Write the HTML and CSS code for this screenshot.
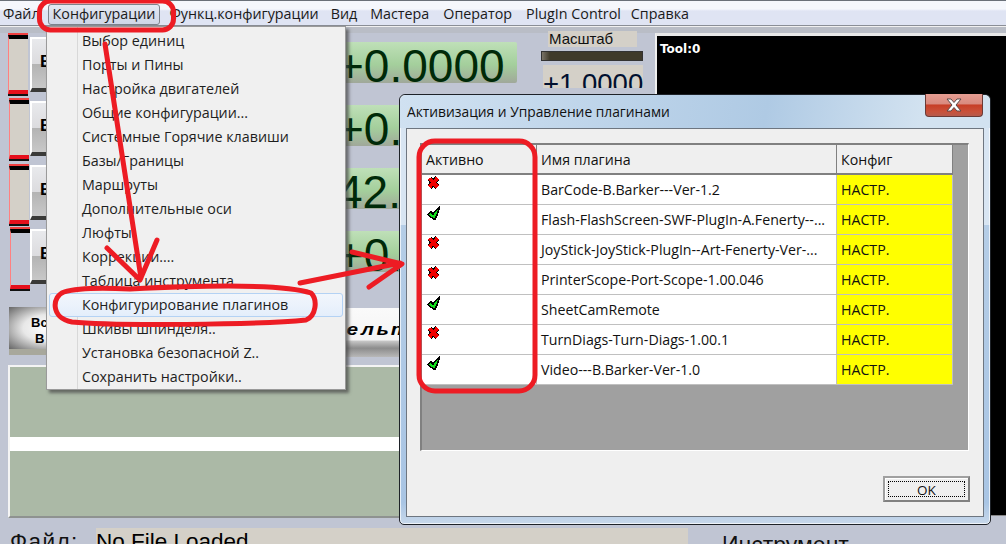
FILE: index.html
```html
<!DOCTYPE html>
<html lang="ru">
<head>
<meta charset="utf-8">
<title>Конфигурирование плагинов</title>
<link rel="stylesheet" href="styles.css">
</head>
<body>
<div class="app">
  <nav class="menubar">
    <span class="mi mi-file">Файл</span>
    <span class="mi mi-conf"><span>Конфигурации</span></span>
    <span class="mi mi-func">Функц.конфигурации</span>
    <span class="mi mi-view">Вид</span>
    <span class="mi mi-wiz">Мастера</span>
    <span class="mi mi-op">Оператор</span>
    <span class="mi mi-plug">PlugIn Control</span>
    <span class="mi">Справка</span>
  </nav>

  <div class="canvas">
    <div class="led led1"></div><div class="led led2"></div><div class="led led3"></div><div class="led led4 off"></div>
    <div class="refbtn rb1">В</div><div class="refbtn rb2">В</div><div class="refbtn rb3">В</div><div class="refbtn rb4">В</div>
    <div class="dro d1">+0.0000</div><div class="dro d2">+0.0000</div><div class="dro d3">42.0000</div><div class="dro d4">+0.0000</div>
    <div class="scale-label">Масштаб</div>
    <div class="scale-bar"></div>
    <div class="scale-val">+1.0000</div>
    <div class="tool-view">Tool:0</div>
    <div class="bigbtn"><span class="l1">Все</span><span class="l2">В</span></div>
    <div class="deltabtn"><span>дельта</span></div>
    <div class="toolpath"></div>
    <div class="file-label">Файл:</div>
    <div class="file-box">No File Loaded</div>
    <div class="tool-label">Инструмент</div>
  </div>

  <ul class="menu">
    <li>Выбор единиц</li>
    <li>Порты и Пины</li>
    <li>Настройка двигателей</li>
    <li>Общие конфигурации...</li>
    <li>Системные Горячие клавиши</li>
    <li>Базы/Границы</li>
    <li>Маршруты</li>
    <li>Дополнительные оси</li>
    <li>Люфты</li>
    <li>Коррекции....</li>
    <li>Таблица инструмента.....</li>
    <li class="hot">Конфигурирование плагинов</li>
    <li>Шкивы шпинделя..</li>
    <li>Установка безопасной Z..</li>
    <li>Сохранить настройки..</li>
  </ul>

  <section class="dialog">
    <header class="dlg-title">
      <span>Активизация и Управление плагинами</span>
      <span class="close"><svg width="18" height="14" viewBox="0 0 18 14"><path d="M2 1h4l3 3.500L12 1h4l-5 6 5 6h-4L9 9.500 6 13H2l5-6z" fill="#fff" stroke="#5a4a4a" stroke-width="1"/></svg></span>
    </header>
    <div class="client">
      <div class="grid">
        <div class="table">
          <div class="th">Активно</div><div class="th">Имя плагина</div><div class="th">Конфиг</div>

          <div class="td icon"><svg class="x" viewBox="0 0 14 14"><use href="#cross"/></svg></div><div class="td">BarCode-B.Barker---Ver-1.2</div><div class="td cfg">НАСТР.</div>
          <div class="td icon"><svg class="x" viewBox="0 0 14 14"><use href="#tick"/></svg></div><div class="td">Flash-FlashScreen-SWF-PlugIn-A.Fenerty--...</div><div class="td cfg">НАСТР.</div>
          <div class="td icon"><svg class="x" viewBox="0 0 14 14"><use href="#cross"/></svg></div><div class="td">JoyStick-JoyStick-PlugIn--Art-Fenerty-Ver-...</div><div class="td cfg">НАСТР.</div>
          <div class="td icon"><svg class="x" viewBox="0 0 14 14"><use href="#cross"/></svg></div><div class="td">PrinterScope-Port-Scope-1.00.046</div><div class="td cfg">НАСТР.</div>
          <div class="td icon"><svg class="x" viewBox="0 0 14 14"><use href="#tick"/></svg></div><div class="td">SheetCamRemote</div><div class="td cfg">НАСТР.</div>
          <div class="td icon"><svg class="x" viewBox="0 0 14 14"><use href="#cross"/></svg></div><div class="td">TurnDiags-Turn-Diags-1.00.1</div><div class="td cfg">НАСТР.</div>
          <div class="td icon"><svg class="x" viewBox="0 0 14 14"><use href="#tick"/></svg></div><div class="td">Video---B.Barker-Ver-1.0</div><div class="td cfg">НАСТР.</div>
        </div>
      </div>
      <div class="actions"><button class="ok"><span>OK</span></button></div>
    </div>
  </section>

  <svg class="marks" width="1006" height="544" viewBox="0 0 1006 544">
    <defs>
      <g id="cross" shape-rendering="crispEdges">
        <path d="M2.500 2.500L10.500 11M10.500 2L2.500 11" fill="none" stroke="#000" stroke-width="5.500"/>
        <path d="M2.500 2.500L10.500 11M10.500 2L2.500 11" fill="none" stroke="#f00000" stroke-width="3.800"/>
      </g>
      <g id="tick" shape-rendering="crispEdges">
        <path d="M0.500 8.500L4 6L6 8L13 0.500L10 9L8 13.500L3.500 11Z" fill="#12e01c" stroke="#000" stroke-width="1.500"/>
      </g>
    </defs>
    <g fill="none" stroke="#ed1c24" stroke-width="5" stroke-linecap="round" stroke-linejoin="round">
      <rect x="39.500" y="1" width="134" height="29" rx="11"/>
      <path d="M105 44L141 278M107 248L140 280L157 240"/>
      <path d="M300 283L400 263M352 252L402 264L369 287"/>
      <path d="M130 289C230 284 290 286 311 293C318 300 316 316 306 320C260 325 110 326 72 322C50 318 52 296 64 292C80 287 110 288 130 289Z"/>
      <rect x="419" y="141" width="116" height="250" rx="16"/>
    </g>
  </svg>
</div>
</body>
</html>
```
FILE: styles.css
```css
* { box-sizing: border-box; }
html, body { margin: 0; padding: 0; }
body { width: 1006px; height: 544px; overflow: hidden; font-family: "Open Sans", "Noto Sans", sans-serif; }

.app { position: relative; width: 1006px; height: 544px; overflow: hidden; background: #c0c5d3; }

/* Menu bar */
.menubar { display: flex; align-items: center; height: 26px; padding: 1px 0 0 3px; border-top: 1px solid #6a7078; border-bottom: 1px solid #8a8e96; background: linear-gradient(#f5f7fc 0 8px, #dfe4f3 10px); box-shadow: 0 1px 0 #f0f0f0, 0 7px 0 #b9bdc6; font-size: 14.300px; color: #1a1a1a; white-space: nowrap; }
.mi-file { margin-right: 13px; }
.mi-conf { margin-right: 14px; position: relative; }
.mi-func { margin-right: 12px; }
.mi-view { margin-right: 13px; }
.mi-wiz { margin-right: 14px; }
.mi-op { margin-right: 14px; }
.mi-plug { margin-right: 10px; }
.mi-conf span { position: relative; }
.mi-conf::before { content: ""; position: absolute; left: -5px; right: -5px; top: 0; bottom: -2px; border: 1px solid #7d838c; border-radius: 3px; background: linear-gradient(#e4e8f2, #cfd6e6); }

/* Free-form CNC control screen */
.canvas { position: absolute; inset: 0; }
.led { position: absolute; width: 20px; background: #d4d0c8; border-left: 1px solid #ff8080; border-top: 4px solid #000; border-bottom: 4px solid #e5101c; box-shadow: 0 -2px 0 #f04040, 0 2px 0 #111; }
.led1 { left: 8px; top: 35px; height: 59px; }
.led2 { left: 9px; top: 100px; height: 59px; }
.led3 { left: 9px; top: 166px; height: 58px; }
.led4 { left: 10px; top: 229px; height: 60px; }
.led.off { background: #c0c5d3; }
.refbtn { position: absolute; left: 30px; width: 40px; height: 55px; padding: 13px 0 0 8px; background: linear-gradient(#e8e9ec, #dcdcdf 50%, #b4b4b4 52%, #c8c8c8); border: 2px solid #fff; border-right: 0; border-bottom: 4px solid #3a3a38; font: bold 17px "Liberation Sans", sans-serif; color: #000; }
.rb1 { top: 37px; }
.rb2 { top: 101px; }
.rb3 { top: 165px; }
.rb4 { top: 229px; }

.dro { position: absolute; left: 300px; width: 217px; height: 41px; padding-left: 37px; overflow: hidden; background: linear-gradient(#bfe0b8, #a4cf9c 55%, #a0a89a); font: 46px/48px "Liberation Sans", sans-serif; color: #002a08; white-space: nowrap; border-radius: 0 2px 2px 0; }
.d1 { top: 42px; }
.d2 { top: 105px; }
.d3 { top: 168px; }
.d4 { top: 231px; }

.scale-label { position: absolute; left: 548px; top: 31px; width: 89px; height: 16px; background: #d4d0c8; font: 15px/16px "Liberation Sans", sans-serif; padding-left: 1px; color: #111; }
.scale-bar { position: absolute; left: 541px; top: 51px; width: 102px; height: 10px; background: linear-gradient(90deg, #7a7468, #3f3a2a 8px); border: 1px solid #333; }
.scale-val { position: absolute; left: 543px; top: 65px; width: 100px; height: 23px; overflow: hidden; background: #d4d0c8; font: 27.500px/37px "Liberation Sans", sans-serif; color: #001030; white-space: nowrap; }

.tool-view { position: absolute; left: 655px; top: 33px; width: 351px; height: 483px; padding: 6px 0 0 3px; background: #000; border-left: 2px solid #f0f0f0; border-top: 3px solid #e8e8e8; border-bottom: 1px solid #888; color: #fff; font: bold 12px "DejaVu Sans", sans-serif; }

.bigbtn { display: flex; flex-direction: column; position: absolute; left: 9px; top: 307px; width: 60px; height: 48px; padding: 8px 0 0 22px; background: radial-gradient(ellipse at 65% 50%, #fff, #e8e8e8 45%, #666 100%); border-bottom: 6px solid #a8a89c; font: bold 13px/16px "Liberation Sans", sans-serif; color: #000; }
.bigbtn .l2 { padding-left: 4px; }
.deltabtn { position: absolute; left: 300px; top: 308px; width: 100px; height: 49px; padding: 13px 0 0 31px; background: linear-gradient(#fafafa 0, #f4f4f4 65%, #c4c4c4 68%, #8c8c8c 82%, #b8b8b8); font: italic bold 16px "Liberation Sans", sans-serif; letter-spacing: 2px; color: #000; white-space: nowrap; overflow: hidden; }
.deltabtn span { display: inline-block; transform: scaleX(1.3); transform-origin: left center; }

.toolpath { position: absolute; left: 8px; top: 365px; width: 400px; height: 153px; border-top: 2px solid #f4f4f4; border-left: 2px solid #f4f4f4; border-bottom: 2px solid #8e9290; background: linear-gradient(#abb9a6 0 70px, #fff 70px 84px, #abb9a6 84px); }

.file-label { position: absolute; left: 10px; top: 528px; font: 22.500px/27px "Liberation Sans", sans-serif; letter-spacing: 1.400px; color: #111; }
.file-box { position: absolute; left: 96px; top: 528px; width: 592px; height: 16px; overflow: hidden; background: #d4d0c8; font: 22.500px/27px "Liberation Sans", sans-serif; color: #000; }
.tool-label { position: absolute; left: 722px; top: 533px; font: 23px/24px "Liberation Sans", sans-serif; color: #111; }

/* Drop-down menu */
.menu { position: absolute; left: 46px; top: 26px; width: 300px; height: 364px; margin: 0; padding: 2px; list-style: none; background: linear-gradient(90deg, #f0f0f0 30px, #d8d8d8 30px, #d8d8d8 31px, #f0f0f0 31px); border: 1px solid #9a9a9a; box-shadow: 3px 3px 3px rgba(70,70,70,.7); font-size: 14.300px; color: #1e1e1e; }
.menu li { height: 24px; line-height: 24px; padding-left: 33px; white-space: nowrap; }
.menu .hot { line-height: 22px; background: linear-gradient(#f2f6fc, #e4eefb); border: 1px solid #b4d2f4; border-radius: 3px; padding-left: 32px; }

/* Plugin dialog */
.dialog { position: absolute; left: 399px; top: 94px; width: 592px; height: 431px; padding: 0 6px 7px; display: flex; flex-direction: column; background: linear-gradient(#d8e5f2 0 130px, #b5cde6 130px, #a9c5e4 95%, #c8d8ea); border: 1px solid #1e2228; border-radius: 6px 6px 5px 5px; box-shadow: inset 0 0 0 1px rgba(255,255,255,.7); }
.dlg-title { position: relative; flex: none; height: 33px; margin: 0 -6px; padding: 7px 0 0 7px; border-radius: 6px 6px 0 0; background: linear-gradient(100deg, #d0e1f1, #afcae4 62%, #d2e2f0 88%); font-size: 13.800px; color: #111; white-space: nowrap; }
.close { display: flex; align-items: center; justify-content: center; position: absolute; right: 7px; top: -1px; width: 58px; height: 23px; background: linear-gradient(#e59d92, #d98a7e 45%, #c73e26 50%, #c9513a 80%, #b65a4c); border: 1px solid #6a3a36; border-top: 0; border-radius: 0 0 4px 4px; }
.client { flex: 1; padding: 14px 14px 0 13px; background: #efefef; border: 1px solid #6e7680; display: flex; flex-direction: column; }
.grid { height: 308px; background: #a0a0a0; border-top: 2px solid #808080; border-left: 2px solid #808080; border-right: 1px solid #fff; border-bottom: 1px solid #fff; }
.table { display: grid; grid-template-columns: 115px 300px 116px; grid-auto-rows: 30px; width: 531px; font-size: 14.200px; color: #111; }
.th { display: flex; align-items: center; padding-left: 4px; background: #efefef; border-right: 1px solid #808080; border-bottom: 2px solid #808080; }
.td { display: flex; align-items: center; padding-left: 4px; background: #fff; border-right: 1px solid #c0c0c0; border-bottom: 1px solid #c0c0c0; white-space: nowrap; overflow: hidden; }
.td.cfg { background: #ff0; }
.td.icon { align-items: flex-start; padding: 1px 0 0 5px; }
.x { width: 14px; height: 14px; }
.actions { display: flex; justify-content: flex-end; margin-top: 25px; margin-right: -1px; }
.ok { width: 87px; height: 26px; padding: 3px; background: #efefef; border: 2px solid #808080; border-top-color: #a0a0a0; border-left-color: #a0a0a0; box-shadow: inset 1px 1px 0 #fff; font: 13.500px "Open Sans", "Noto Sans", sans-serif; color: #111; }
.ok span { display: block; height: 100%; line-height: 16px; border: 1px dotted #000; }

/* Red annotations drawn over the screenshot */
.marks { position: absolute; left: 0; top: 0; pointer-events: none; }
```
